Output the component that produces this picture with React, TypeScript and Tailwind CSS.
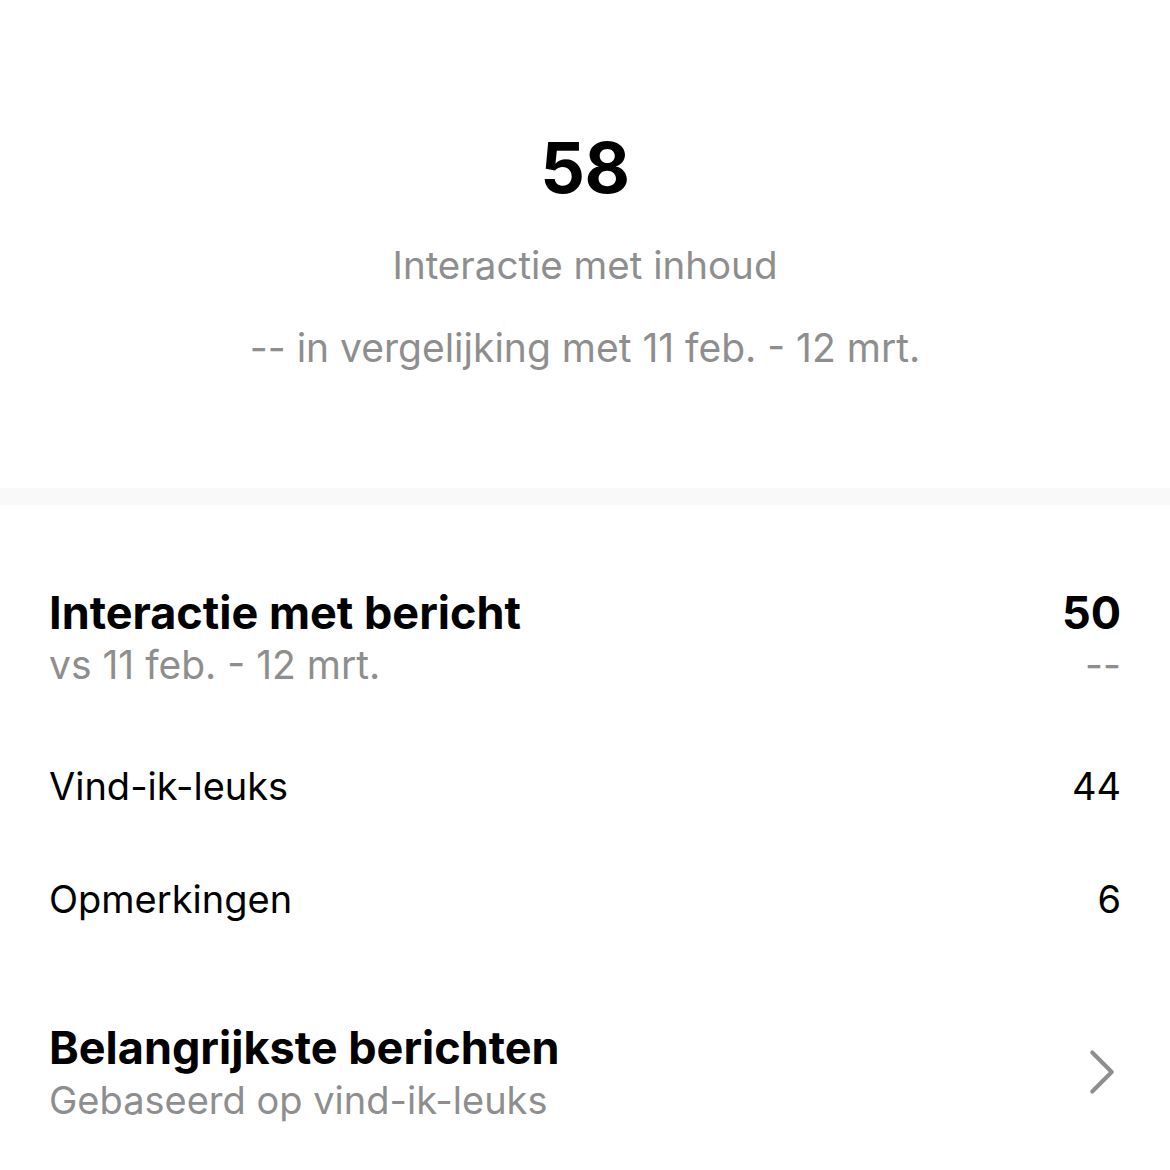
import { ChevronRight } from 'lucide-react';

const rijen = [
  { label: 'Vind-ik-leuks', waarde: '44' },
  { label: 'Opmerkingen', waarde: '6' },
];

export default function App() {
  return (
    <div className="h-[1170px] w-[1170px] bg-white font-['Inter','Roboto',sans-serif] text-black">
      {/* Totaal */}
      <div className="flex h-[488px] flex-col items-center pt-[128px]">
        <div className="text-[70px] leading-[80px] font-bold tracking-[-0.5px]">58</div>
        <div className="mt-[35px] text-[38.5px] leading-[44px] text-[#8e8e8e]">Interactie met inhoud</div>
        <div className="mt-[39px] text-[39px] leading-[44px] text-[#8e8e8e]">
          -- in vergelijking met 11 feb. - 12 mrt.
        </div>
      </div>

      <div className="h-[17px] bg-[#f9f9f9]" />

      <div className="px-[49px] pt-[82px]">
        <div className="flex items-start justify-between">
          <div>
            <div className="text-[45px] leading-[52px] font-bold">Interactie met bericht</div>
            <div className="text-[39px] leading-[52px] text-[#8e8e8e]">vs 11 feb. - 12 mrt.</div>
          </div>
          <div className="flex flex-col items-end">
            <div className="text-[45px] leading-[52px] font-bold">50</div>
            <div className="text-[39px] leading-[52px] text-[#8e8e8e]">--</div>
          </div>
        </div>

        <div className="mt-[39px] flex flex-col">
          {rijen.map((r) => (
            <div key={r.label} className="flex h-[113px] items-center justify-between text-[38px]">
              <span>{r.label}</span>
              <span>{r.waarde}</span>
            </div>
          ))}
        </div>

        <div className="mt-[66px] flex items-center justify-between">
          <div>
            <div className="text-[45px] leading-[52px] font-bold">Belangrijkste berichten</div>
            <div className="text-[38px] leading-[52px] text-[#8e8e8e]">Gebaseerd op vind-ik-leuks</div>
          </div>
          <ChevronRight className="mr-[-20px] mt-[-4px] size-[78px] text-[#8e8e8e]" strokeWidth={1.25} />
        </div>
      </div>
    </div>
  );
}
